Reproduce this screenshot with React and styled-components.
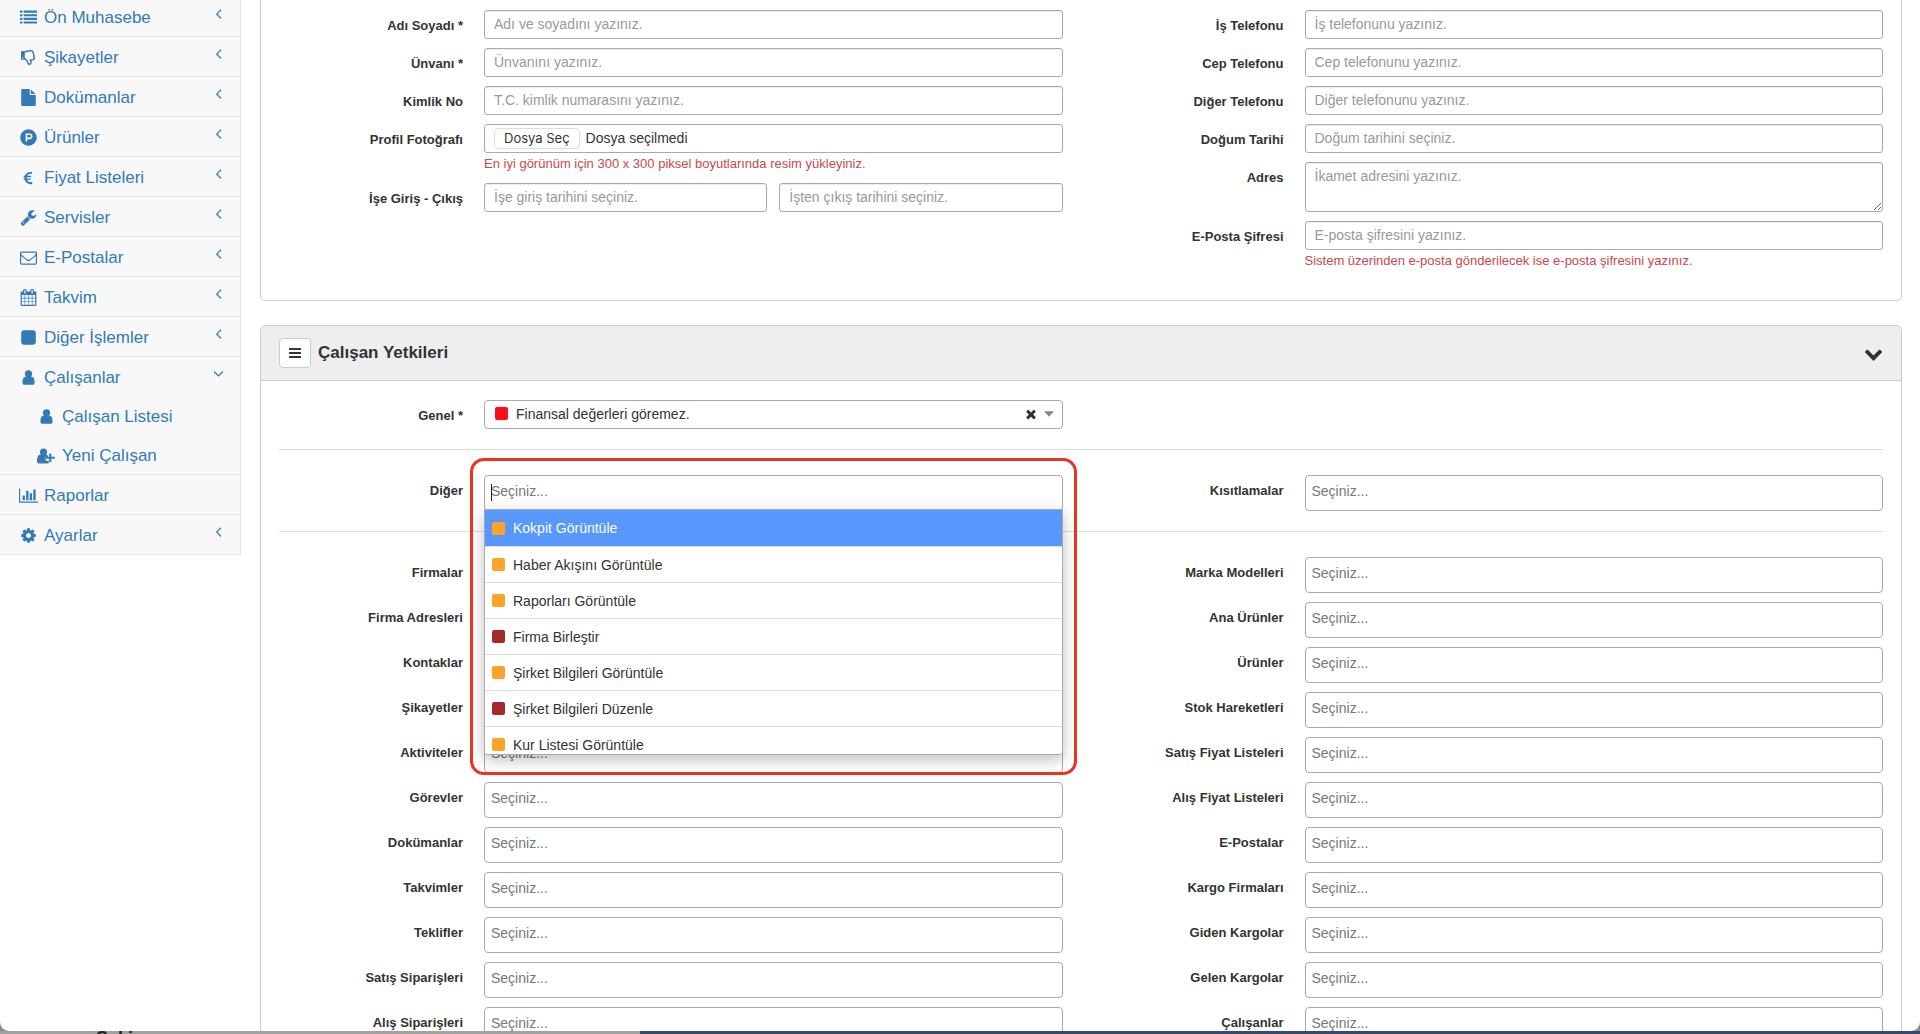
import React, { useState } from "react";
import styled, { createGlobalStyle } from "styled-components";
import {
    FaEuroSign,
    FaProductHunt,
    FaRegThumbsDown,
} from "react-icons/fa";

// font-awesome 4 shapes, drawn on a 1792 grid (some are 2048 wide)
const ICONS = {
    list: "M0 1312h256v224h-256zM0 928h256v224h-256zM0 544h256v224h-256zM0 160h256v224h-256zM384 1312h1408v224h-1408zM384 928h1408v224h-1408zM384 544h1408v224h-1408zM384 160h1408v224h-1408z",
    file: "M1136 528v-488q22 14 36 28l424 424q14 14 28 36zm-112 16q0 40 28 68t68 28h544v1056q0 40-28 68t-68 28h-1344q-40 0-68-28t-28-68v-1600q0-40 28-68t68-28h800v544z",
    wrench: "M448 1472q0-26-19-45t-45-19-45 19-19 45 19 45 45 19 45-19 19-45zm644-420l-682 682q-37 37-90 37-52 0-91-37l-106-108q-38-36-38-90 0-53 38-91l681-681q39 98 114.500 173.500t173.500 114.500zm634-435q0 39-23 106-47 134-164.500 217.500t-258.500 83.500q-185 0-316.500-131.500t-131.500-316.500 131.500-316.500 316.500-131.500q58 0 121.500 16.500t107.500 46.500q16 11 16 28t-16 28l-293 169v224l193 107q5-3 79-48.500t135.500-81 70.500-35.500q15 0 23.500 10t8.500 25z",
    mail: "M1664 1504v-768q-32 36-69 66-268 206-426 338-51 43-83 67t-86.500 48.500-102.500 24.500h-2q-48 0-102.500-24.500t-86.500-48.500-83-67q-158-132-426-338-37-30-69-66v768q0 13 9.500 22.500t22.500 9.500h1472q13 0 22.500-9.500t9.500-22.500zm0-1051v-24.500l-.5-13-3-12.500-5.500-9-9-7.500-14-2.500h-1472q-13 0-22.500 9.500t-9.500 22.500q0 168 147 284 193 152 401 317 6 5 35 29.500t46 37.500 44.500 31.500 50.500 27.500 43 9h2q20 0 43-9t50.500-27.500 44.500-31.500 46-37.500 35-29.500q208-165 401-317 54-43 100.500-115.500t46.500-131.500zm128-37v1088q0 66-47 113t-113 47h-1472q-66 0-113-47t-47-113v-1088q0-66 47-113t113-47h1472q66 0 113 47t47 113z",
    calendar: "M192 1664h288v-288h-288v288zm352 0h320v-288h-320v288zm-352-352h288v-320h-288v320zm352 0h320v-320h-320v320zm-352-384h288v-288h-288v288zm736 736h320v-288h-320v288zm-384-736h320v-288h-320v288zm768 736h288v-288h-288v288zm-384-352h320v-320h-320v320zm-352-864v-288q0-13-9.500-22.500t-22.500-9.500h-64q-13 0-22.500 9.500t-9.500 22.500v288q0 13 9.500 22.500t22.500 9.500h64q13 0 22.500-9.500t9.500-22.500zm736 864h288v-320h-288v320zm-384-384h320v-288h-320v288zm384 0h288v-288h-288v288zm32-480v-288q0-13-9.500-22.500t-22.500-9.500h-64q-13 0-22.500 9.500t-9.500 22.500v288q0 13 9.500 22.500t22.500 9.500h64q13 0 22.500-9.500t9.500-22.500zm384-64v1280q0 52-38 90t-90 38h-1408q-52 0-90-38t-38-90v-1280q0-52 38-90t90-38h128v-96q0-66 47-113t113-47h64q66 0 113 47t47 113v96h384v-96q0-66 47-113t113-47h64q66 0 113 47t47 113v96h128q52 0 90 38t38 90z",
    square: "M1664 416v960q0 119-84.500 203.500t-203.500 84.500h-960q-119 0-203.500-84.500t-84.500-203.500v-960q0-119 84.500-203.500t203.500-84.500h960q119 0 203.500 84.500t84.500 203.500z",
    user: "M896 128a384 384 0 0 1 0 768a384 384 0 0 1 0-768zM576 820h640c220 0 320 250 320 590c0 160-90 254-213 254h-854c-123 0-213-94-213-254c0-340 100-590 320-590z",
    userPlus: "M704 128a384 384 0 0 1 0 768a384 384 0 0 1 0-768zM320 820h700q90 20 150 96v108h-152q-90 0-90 128v192q0 128 128 128h214v230q-60 62-171 62h-832c-160 0-267-94-267-254c0-340 100-690 320-690zM1312 672h224v352h384v224h-384v352h-224v-352h-352v-224h352z",
    chart: "M640 896v512h-256v-512h256zm384-512v1024h-256v-1024h256zm1024 1152v128h-2048v-1536h128v1408h1920zm-640-896v768h-256v-768h256zm384-384v1152h-256v-1152h256z",
    cog: "M1152 896q0-106-75-181t-181-75-181 75-75 181 75 181 181 75 181-75 75-181zm512-109v222q0 12-8 23t-20 13l-185 28q-19 54-39 91 35 50 107 138 10 12 10 25t-9 23q-27 37-99 108t-94 71q-12 0-26-9l-138-108q-44 23-91 38-16 136-29 186-7 28-36 28h-222q-14 0-24.500-8.500t-11.500-21.500l-28-184q-49-16-90-37l-141 107q-10 9-25 9-14 0-25-11-126-114-165-168-7-10-7-23 0-12 8-23 15-21 51-66.500t54-70.500q-27-50-41-99l-183-27q-13-2-21-12.500t-8-23.500v-222q0-12 8-23t19-13l186-28q14-46 39-92-40-57-107-138-10-12-10-24 0-10 9-23 26-36 98.500-107.500t94.500-71.500q13 0 26 10l138 107q44-23 91-38 16-136 29-186 7-28 36-28h222q14 0 24.500 8.500t11.500 21.500l28 184q49 16 90 37l142-107q9-9 24-9 13 0 25 10 129 119 165 170 7 8 7 22 0 12-8 23-15 21-51 66.500t-54 70.500q26 50 41 98l183 28q13 2 21 12.500t8 23.500z",
    angleLeft: "M1203 544q0 13-10 23l-393 393 393 393q10 10 10 23t-10 23l-50 50q-10 10-23 10t-23-10l-466-466q-10-10-10-23t10-23l466-466q10-10 23-10t23 10l50 50q10 10 10 23z",
    angleDown: "M1395 736q0 13-10 23l-466 466q-10 10-23 10t-23-10l-466-466q-10-10-10-23t10-23l50-50q10-10 23-10t23 10l393 393 393-393q10-10 23-10t23 10l50 50q10 10 10 23z",
    bars: "M1664 1344v128q0 64-64 64h-1408q-64 0-64-64v-128q0-64 64-64h1408q64 0 64 64zm0-512v128q0 64-64 64h-1408q-64 0-64-64v-128q0-64 64-64h1408q64 0 64 64zm0-512v128q0 64-64 64h-1408q-64 0-64-64v-128q0-64 64-64h1408q64 0 64 64z",
    chevronDown: "M1683 808l-742 741q-19 19-45 19t-45-19l-742-741q-19-19-19-45.500t19-45.500l166-165q19-19 45-19t45 19l531 531 531-531q19-19 45-19t45 19l166 165q19 19 19 45.500t-19 45.500z",
    times: "M1490 1322q0 40-28 68l-136 136q-28 28-68 28t-68-28l-294-294-294 294q-28 28-68 28t-68-28l-136-136q-28-28-28-68t28-68l294-294-294-294q-28-28-28-68t28-68l136-136q28-28 68-28t68 28l294 294 294-294q28-28 68-28t68 28l136 136q28 28 28 68t-28 68l-294 294 294 294q28 28 28 68z",
    caret: "M0 400h1792l-896 1000z",
};

const Icon = ({ name, size = 17, wide }) => (
    <svg
        width={wide ? Math.round(size * 8 / 7) : size}
        height={size}
        viewBox={wide ? "0 0 2048 1792" : "0 0 1792 1792"}
        fill="currentColor"
        aria-hidden="true"
    >
        <path d={ICONS[name]} />
    </svg>
);

const menu = [
    { title: "Ön Muhasebe", icon: <Icon name="list" />, arrow: true },
    { title: "Şikayetler", icon: <FaRegThumbsDown size={15} />, arrow: true },
    { title: "Dokümanlar", icon: <Icon name="file" />, arrow: true },
    { title: "Ürünler", icon: <FaProductHunt size={17} />, arrow: true },
    { title: "Fiyat Listeleri", icon: <FaEuroSign size={14} />, arrow: true },
    { title: "Servisler", icon: <Icon name="wrench" />, arrow: true },
    { title: "E-Postalar", icon: <Icon name="mail" />, arrow: true },
    { title: "Takvim", icon: <Icon name="calendar" />, arrow: true },
    { title: "Diğer İşlemler", icon: <Icon name="square" />, arrow: true },
    {
        title: "Çalışanlar",
        icon: <Icon name="user" />,
        arrow: true,
        children: [
            { title: "Çalışan Listesi", icon: <Icon name="user" /> },
            { title: "Yeni Çalışan", icon: <Icon name="userPlus" wide /> },
        ],
    },
    { title: "Raporlar", icon: <Icon name="chart" wide /> },
    { title: "Ayarlar", icon: <Icon name="cog" />, arrow: true },
];

const leftPermissions = [
    "Firmalar",
    "Firma Adresleri",
    "Kontaklar",
    "Şikayetler",
    "Aktiviteler",
    "Görevler",
    "Dokümanlar",
    "Takvimler",
    "Teklifler",
    "Satış Siparişleri",
    "Alış Siparişleri",
];

const rightPermissions = [
    "Marka Modelleri",
    "Ana Ürünler",
    "Ürünler",
    "Stok Hareketleri",
    "Satış Fiyat Listeleri",
    "Alış Fiyat Listeleri",
    "E-Postalar",
    "Kargo Firmaları",
    "Giden Kargolar",
    "Gelen Kargolar",
    "Çalışanlar",
];

const options = [
    { text: "Kokpit Görüntüle", color: "#fea32b" },
    { text: "Haber Akışını Görüntüle", color: "#fea32b" },
    { text: "Raporları Görüntüle", color: "#fea32b" },
    { text: "Firma Birleştir", color: "#a52a2e" },
    { text: "Şirket Bilgileri Görüntüle", color: "#fea32b" },
    { text: "Şirket Bilgileri Düzenle", color: "#a52a2e" },
    { text: "Kur Listesi Görüntüle", color: "#fea32b" },
];

const TextField = ({ id, label, placeholder, help }) => (
    <Field>
        <Label htmlFor={id}>{label}</Label>
        <Control>
            <Input id={id} type="text" placeholder={placeholder} />
            {help && <Help>{help}</Help>}
        </Control>
    </Field>
);

const TagField = ({ id, label }) => (
    <Field>
        <Label htmlFor={id}>{label}</Label>
        <Control>
            <TagInput id={id} type="text" placeholder="Seçiniz..." />
        </Control>
    </Field>
);

const SideMenu = () => (
    <Sidebar>
        {menu.map((item) => (
            <MenuItem key={item.title}>
                <MenuLink href="#">
                    <IconSlot>{item.icon}</IconSlot>
                    <span>{item.title}</span>
                    {item.arrow && (
                        <Arrow>
                            <Icon name={item.children ? "angleDown" : "angleLeft"} />
                        </Arrow>
                    )}
                </MenuLink>
                {item.children?.map((child) => (
                    <SubLink key={child.title} href="#">
                        <IconSlot>{child.icon}</IconSlot>
                        <span>{child.title}</span>
                    </SubLink>
                ))}
            </MenuItem>
        ))}
    </Sidebar>
);

const OtherField = () => {
    const [active, setActive] = useState(0);

    return (
        <Field>
            <Label htmlFor="diger">Diğer</Label>
            <Control>
                <TagInput id="diger" type="text" placeholder="Seçiniz..." />
                <TextCursor />
                <Dropdown role="listbox">
                    {options.map((option, index) => (
                        <Option
                            key={option.text}
                            role="option"
                            aria-selected={index === active}
                            $active={index === active}
                            onMouseEnter={() => setActive(index)}
                        >
                            <Swatch $color={option.color} />
                            {option.text}
                        </Option>
                    ))}
                </Dropdown>
                <Highlight />
            </Control>
        </Field>
    );
};

const App = () => {
    return (
        <Screen>
            <GlobalStyle />
            <Page>
                <SideMenu />
                <Main>
                    <Panel $continued>
                        <Body>
                            <Columns>
                                <Column>
                                    <TextField id="ad" label="Adı Soyadı *" placeholder="Adı ve soyadını yazınız." />
                                    <TextField id="unvan" label="Ünvanı *" placeholder="Ünvanını yazınız." />
                                    <TextField id="kimlik" label="Kimlik No" placeholder="T.C. kimlik numarasını yazınız." />
                                    <Field>
                                        <Label htmlFor="foto">Profil Fotoğrafı</Label>
                                        <Control>
                                            <FileBox>
                                                <FileButton type="button" id="foto">Dosya Seç</FileButton>
                                                <span>Dosya seçilmedi</span>
                                            </FileBox>
                                            <Help>En iyi görünüm için 300 x 300 piksel boyutlarında resim yükleyiniz.</Help>
                                        </Control>
                                    </Field>
                                    <Field>
                                        <Label htmlFor="giris">İşe Giriş - Çıkış</Label>
                                        <Dates>
                                            <Input id="giris" type="text" placeholder="İşe giriş tarihini seçiniz." />
                                            <Input type="text" aria-label="İşten çıkış" placeholder="İşten çıkış tarihini seçiniz." />
                                        </Dates>
                                    </Field>
                                </Column>
                                <Column>
                                    <TextField id="is" label="İş Telefonu" placeholder="İş telefonunu yazınız." />
                                    <TextField id="cep" label="Cep Telefonu" placeholder="Cep telefonunu yazınız." />
                                    <TextField id="digerTel" label="Diğer Telefonu" placeholder="Diğer telefonunu yazınız." />
                                    <TextField id="dogum" label="Doğum Tarihi" placeholder="Doğum tarihini seçiniz." />
                                    <Field>
                                        <Label htmlFor="adres">Adres</Label>
                                        <Control>
                                            <TextArea id="adres" placeholder="İkamet adresini yazınız." />
                                        </Control>
                                    </Field>
                                    <TextField
                                        id="sifre"
                                        label="E-Posta Şifresi"
                                        placeholder="E-posta şifresini yazınız."
                                        help="Sistem üzerinden e-posta gönderilecek ise e-posta şifresini yazınız."
                                    />
                                </Column>
                            </Columns>
                        </Body>
                    </Panel>

                    <Panel>
                        <Header>
                            <BarsButton type="button" aria-label="Menü">
                                <Icon name="bars" size={14} />
                            </BarsButton>
                            <Heading>Çalışan Yetkileri</Heading>
                            <Toggle type="button" aria-label="Daralt">
                                <Icon name="chevronDown" size={19} />
                            </Toggle>
                        </Header>
                        <Body>
                            <Columns>
                                <Field>
                                    <Label htmlFor="genel">Genel *</Label>
                                    <SelectBox>
                                        <Swatch $color="#fc0d1b" />
                                        <Select id="genel" defaultValue="finans">
                                            <option value="finans">Finansal değerleri göremez.</option>
                                        </Select>
                                        <Clear type="button" aria-label="Temizle">
                                            <Icon name="times" size={14} />
                                        </Clear>
                                        <Caret>
                                            <Icon name="caret" size={10} />
                                        </Caret>
                                    </SelectBox>
                                </Field>
                            </Columns>
                            <Divider />
                            <Columns>
                                <OtherField />
                                <TagField id="kisit" label="Kısıtlamalar" />
                            </Columns>
                            <Divider />
                            <Columns>
                                <Column>
                                    {leftPermissions.map((name, index) => (
                                        <TagField key={name} id={"sol" + index} label={name} />
                                    ))}
                                </Column>
                                <Column>
                                    {rightPermissions.map((name, index) => (
                                        <TagField key={name} id={"sag" + index} label={name} />
                                    ))}
                                </Column>
                            </Columns>
                        </Body>
                    </Panel>
                </Main>
            </Page>
            <Behind>
                <BehindLeft>Seki</BehindLeft>
            </Behind>
        </Screen>
    );
};

const GlobalStyle = createGlobalStyle`
  * {
    box-sizing: border-box;
  }

  body {
    margin: 0;
    overflow: hidden;
    background: #8d8d8d;
    color: #333;
    font-family: "Liberation Sans", Arial, sans-serif;
    font-size: 14px;
    line-height: 20px;
  }

  input, textarea, select, button {
    font-family: inherit;
    font-size: 14px;
    color: #333;
  }
`;

const Screen = styled.div`
  height: 100vh;
  display: flex;
  flex-direction: column;
`;

const Page = styled.div`
  flex: 1;
  min-height: 0;
  display: flex;
  align-items: flex-start;
  overflow: hidden;
  background: #fff;
  border-radius: 0 0 9px 9px;
`;

/* the windows that peek out under the page */
const Behind = styled.div`
  height: 3px;
  display: flex;
  overflow: hidden;
  background: #2f4b74;
`;

const BehindLeft = styled.div`
  width: 640px;
  padding-left: 96px;
  background: #a3a09d;
  color: #222;
  font-size: 18px;
  font-weight: bold;
  line-height: 14px;
`;

const Sidebar = styled.nav`
  flex: none;
  width: 241px;
  margin-top: -3px;
  background: #f8f8f8;
  border-right: 1px solid #e7e7e7;
`;

const MenuItem = styled.div`
  border-bottom: 1px solid #e7e7e7;
`;

const MenuLink = styled.a`
  display: flex;
  align-items: center;
  gap: 5px;
  height: 39px;
  padding: 2px 13px 0 17px;
  color: #337ab7;
  font-size: 17px;
  text-decoration: none;
`;

const SubLink = styled(MenuLink)`
  padding-left: 35px;
`;

const IconSlot = styled.span`
  display: flex;
  justify-content: center;
  width: 22px;
`;

const Arrow = styled.span`
  display: flex;
  margin-left: auto;
  padding-bottom: 8px;
`;

const Main = styled.main`
  flex: 1;
  min-width: 0;
  padding: 0 18px 0 19px;
`;

const Panel = styled.section`
  margin-top: ${(props) => (props.$continued ? "-10px" : "24px")};
  border: 1px solid #ccc;
  border-radius: 5px;
`;

const Header = styled.header`
  display: flex;
  align-items: center;
  height: 55px;
  padding: 0 18px;
  background: #eee;
  border-bottom: 1px solid #ccc;
  border-radius: 4px 4px 0 0;
`;

const BarsButton = styled.button`
  display: flex;
  align-items: center;
  justify-content: center;
  width: 32px;
  height: 30px;
  padding: 0;
  background: #fff;
  border: 1px solid #ccc;
  border-radius: 4px;
`;

const Heading = styled.h2`
  margin: 0 0 0 7px;
  font-size: 17px;
  line-height: 24px;
`;

const Toggle = styled.button`
  display: flex;
  margin-left: auto;
  padding: 0;
  background: none;
  border: 0;
`;

const Body = styled.div`
  padding: 19px 18px 29px;
`;

const Columns = styled.div`
  display: grid;
  grid-template-columns: 1fr 1fr;
  align-items: start;
  gap: 37px;
`;

const Column = styled.div`
  display: flex;
  flex-direction: column;
  gap: 9px;
`;

const Field = styled.div`
  display: grid;
  grid-template-columns: 184px minmax(0, 1fr);
  gap: 21px;
`;

const Label = styled.label`
  padding-top: 6px;
  font-size: 13px;
  font-weight: bold;
  text-align: right;
`;

const Control = styled.div`
  position: relative;
  display: flex;
  flex-direction: column;
`;

const Dates = styled.div`
  display: grid;
  grid-template-columns: 1fr 1fr;
  gap: 12px;
`;

const Input = styled.input`
  width: 100%;
  height: 29px;
  padding: 0 9px 1px;
  background: #fff;
  border: 1px solid #aaa;
  border-radius: 3px;
  box-shadow: inset 0 1px 1px rgba(0, 0, 0, 0.075);

  &::placeholder {
    color: #999;
  }
`;

const TextArea = styled(Input).attrs({ as: "textarea" })`
  height: 50px;
  padding: 3px 9px;
  line-height: 20px;
  resize: vertical;
`;

const TagInput = styled(Input)`
  height: 36px;
  padding: 0 6px 4px;
  border-radius: 4px;
  box-shadow: none;

  &::placeholder {
    color: #777;
  }
`;

const Help = styled.div`
  color: #c9484c;
  font-size: 13px;
  line-height: 21px;
`;

const FileBox = styled.div`
  display: flex;
  align-items: center;
  gap: 6px;
  height: 29px;
  padding: 0 9px 1px;
  border: 1px solid #aaa;
  border-radius: 3px;
`;

const FileButton = styled.button`
  height: 21px;
  padding: 0 9px;
  background: #fff;
  border: 1px solid #ddd;
  border-radius: 4px;
  font-family: Inter, sans-serif;
  font-size: 13px;
  line-height: 18px;
`;

const SelectBox = styled.div`
  display: flex;
  align-items: center;
  height: 29px;
  padding: 0 8px 2px 10px;
  border: 1px solid #aaa;
  border-radius: 4px;
`;

const Select = styled.select`
  flex: 1;
  padding: 0 8px;
  appearance: none;
  background: none;
  border: 0;
`;

const Clear = styled.button`
  display: flex;
  margin-right: 6px;
  padding: 0;
  background: none;
  border: 0;
`;

const Caret = styled.span`
  display: flex;
  color: #888;
`;

const Swatch = styled.span`
  flex: none;
  width: 13px;
  height: 13px;
  border-radius: 2px;
  background: ${(props) => props.$color};
`;

const Divider = styled.hr`
  margin: 20px 0 25px;
  border: 0;
  border-top: 1px solid #ddd;
`;

const TextCursor = styled.span`
  position: absolute;
  top: 9px;
  left: 7px;
  width: 1px;
  height: 17px;
  background: #222;
`;

const Dropdown = styled.ul`
  position: absolute;
  z-index: 1;
  top: 34px;
  left: 0;
  right: 0;
  height: 246px;
  margin: 0;
  padding: 0;
  overflow: hidden;
  list-style: none;
  background: #fff;
  border: 1px solid #aaa;
  border-radius: 0 0 4px 4px;
  box-shadow: 0 5px 15px rgba(0, 0, 0, 0.25);
`;

const Option = styled.li`
  display: flex;
  align-items: center;
  gap: 8px;
  height: 36px;
  padding: 0 7px;
  background: ${(props) => (props.$active ? "#5897fb" : "#fff")};
  color: ${(props) => (props.$active ? "#fff" : "#333")};

  & + & {
    border-top: 1px solid #ddd;
  }
`;

/* red frame around the open list */
const Highlight = styled.div`
  position: absolute;
  z-index: 2;
  top: -17px;
  left: -14px;
  right: -14px;
  height: 317px;
  border: 3px solid #ea3323;
  border-radius: 14px;
  pointer-events: none;
`;

export default App;
